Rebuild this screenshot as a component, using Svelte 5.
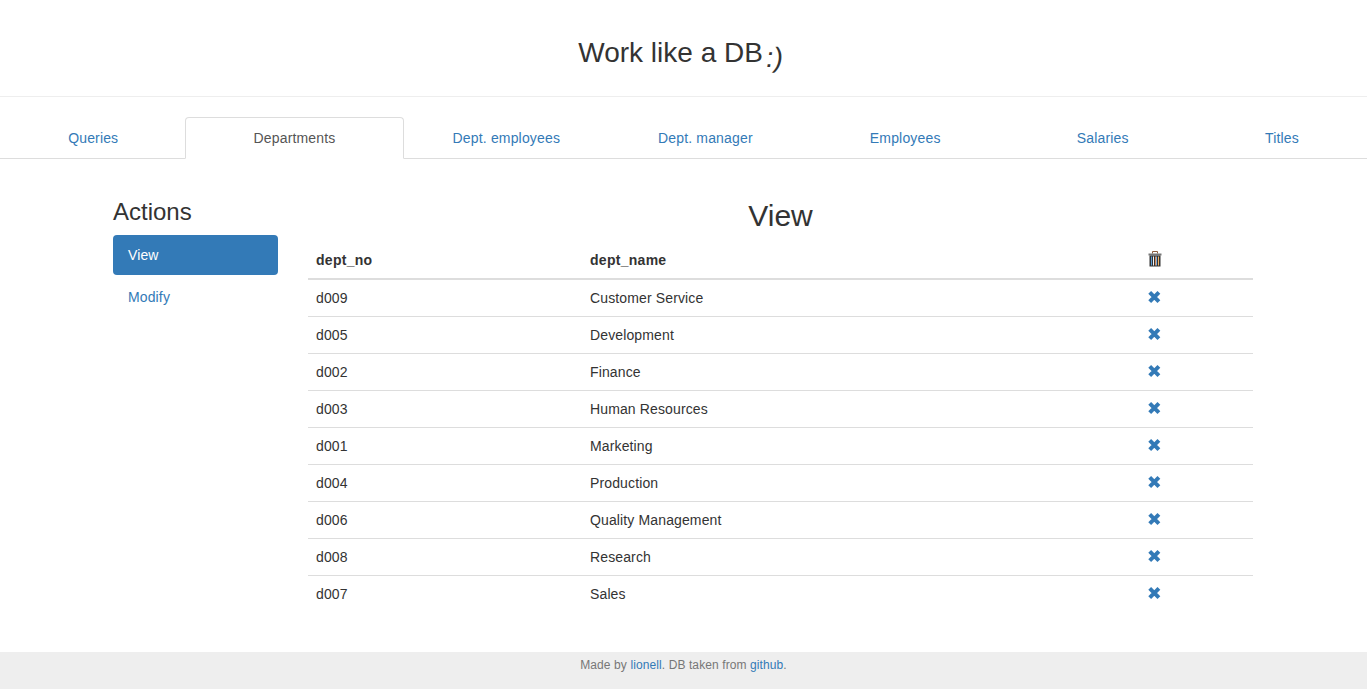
<script>
  const tabs = ['Queries', 'Departments', 'Dept. employees', 'Dept. manager', 'Employees', 'Salaries', 'Titles'];
  const active = 'Departments';
  const departments = [
    ['d009', 'Customer Service'],
    ['d005', 'Development'],
    ['d002', 'Finance'],
    ['d003', 'Human Resources'],
    ['d001', 'Marketing'],
    ['d004', 'Production'],
    ['d006', 'Quality Management'],
    ['d008', 'Research'],
    ['d007', 'Sales']
  ];
</script>

<header class="title">
  <h1>Work like a DB <small>:)</small></h1>
</header>

<ul class="tabs">
  {#each tabs as tab}
    <li class:active={tab === active}><a href="#{tab}">{tab}</a></li>
  {/each}
</ul>

<main class="container">
  <aside class="actions">
    <h3>Actions</h3>
    <a class="pill on" href="#view">View</a>
    <a class="pill" href="#modify">Modify</a>
  </aside>
  <section class="view">
    <h2>View</h2>
    <table>
      <thead>
        <tr>
          <th class="no">dept_no</th>
          <th class="name">dept_name</th>
          <th class="del">
            <svg class="icon trash" viewBox="0 0 14 16" width="14" height="16" aria-hidden="true">
              <path d="M4.5 2.5V.5h5v2" fill="none" stroke="#8a5a3a" stroke-width="1" />
              <rect x="0.5" y="2.5" width="13" height="2" fill="#777" />
              <path d="M1.5 4.5h11v11h-11z" fill="#333" />
              <path d="M3.5 5.5v9" stroke="#5b9bd5" stroke-width="1" />
              <path d="M5.5 5.5v9" stroke="#f4f4f4" stroke-width="1" />
              <path d="M7.5 5.5v9" stroke="#d98a5a" stroke-width="1" />
              <path d="M8.5 5.5v9" stroke="#7fb0dd" stroke-width="1" />
              <path d="M10.5 5.5v9" stroke="#eeb268" stroke-width="1" />
            </svg>
          </th>
        </tr>
      </thead>
      <tbody>
        {#each departments as [no, name]}
          <tr>
            <td>{no}</td>
            <td>{name}</td>
            <td>
              <svg class="icon" viewBox="0 0 14 14" width="14" height="14" aria-hidden="true">
                <path d="M1.7 2.4l9.2 9.2M10.9 2.4L1.7 11.6" fill="none" stroke="#337ab7" stroke-width="4" />
              </svg>
            </td>
          </tr>
        {/each}
      </tbody>
    </table>
  </section>
</main>

<footer>
  <p>Made by <a href="#lionell">lionell</a>. DB taken from <a href="#github">github</a>.</p>
</footer>

<style>
  :global(body) {
    font-family: "Liberation Sans", Arial, sans-serif;
    font-size: 14px;
    line-height: 1.42857143;
    letter-spacing: 0.13px;
    color: #333;
    background: #fff;
  }
  a {
    color: #337ab7;
    text-decoration: none;
  }
  .title {
    height: 96px;
    border-bottom: 1px solid #eee;
    text-align: center;
  }
  h1 {
    margin: 0;
    padding-top: 38px;
    font-size: 28px;
    font-weight: 500;
    line-height: 1.1;
    letter-spacing: 0;
  }
  small {
    display: inline-block;
    margin: 0 6px 0 -5px;
    font-size: 28px;
    line-height: 1;
    transform: translateY(5px) skewX(-8deg);
  }
  .tabs {
    display: table;
    width: 100%;
    margin: 20px 0 0;
    padding: 0;
    list-style: none;
    border-bottom: 1px solid #ddd;
    letter-spacing: 0.16px;
  }
  .tabs li {
    display: table-cell;
    width: 1%;
  }
  .tabs a {
    display: block;
    padding: 10px 15px;
    margin-bottom: -1px;
    border: 1px solid transparent;
    border-radius: 4px 4px 0 0;
    text-align: center;
  }
  .tabs li:first-child a {
    padding-right: 14px;
  }
  .tabs .active a {
    position: relative;
    color: #555;
    background: #fff;
    border-color: #ddd #ddd #fff;
  }
  .container {
    display: flex;
    width: 1140px;
    padding-right: 1px;
    margin: 0 auto;
    gap: 30px;
    height: 493px;
  }
  .actions {
    width: 165px;
    flex: none;
  }
  h3 {
    margin: 40px 0 10px;
    font-size: 24px;
    font-weight: 500;
    line-height: 1.1;
    letter-spacing: 0;
  }
  .pill {
    display: block;
    padding: 10px 15px;
    border-radius: 4px;
  }
  .pill + .pill {
    margin-top: 2px;
  }
  .pill.on {
    color: #fff;
    background: #337ab7;
  }
  .view {
    flex: 1;
  }
  h2 {
    margin: 40px 0 10px;
    font-size: 30px;
    font-weight: 500;
    line-height: 1.1;
    text-align: center;
    letter-spacing: 0;
  }
  table {
    width: 100%;
    table-layout: fixed;
    border-collapse: collapse;
    border-spacing: 0;
  }
  th, td {
    padding: 8px;
    text-align: left;
    vertical-align: top;
  }
  th {
    border-bottom: 2px solid #ddd;
    letter-spacing: 0.28px;
  }
  td {
    border-top: 1px solid #ddd;
  }
  thead + tbody tr:first-child td {
    border-top: 0;
  }
  .no { width: 274px; box-sizing: border-box; }
  .name { width: 558px; box-sizing: border-box; }
  .icon {
    display: block;
    margin-top: 2px;
  }
  .trash {
    margin-top: 1px;
  }
  footer {
    height: 37px;
    background: #eee;
    text-align: center;
    font-size: 12px;
    letter-spacing: 0.1px;
    color: #777;
  }
  footer p {
    margin: 0;
    padding-top: 5px;
  }
</style>
